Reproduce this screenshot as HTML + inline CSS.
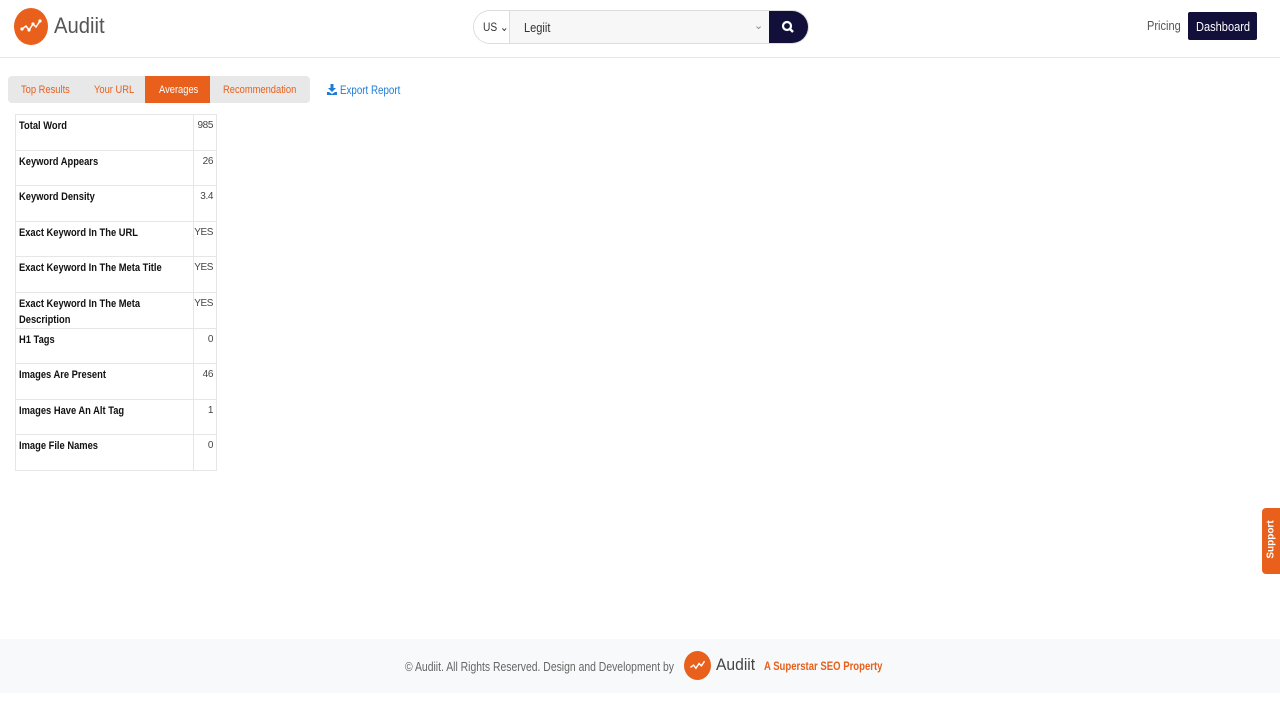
<!DOCTYPE html>
<html><head><meta charset="utf-8"><style>
*{box-sizing:border-box;margin:0;padding:0}
body{width:1280px;height:720px;position:relative;background:#fff;font-family:"Liberation Sans",sans-serif;overflow:hidden}
.sq{display:inline-block;transform:scaleX(.85);transform-origin:left center;white-space:nowrap}
.hdr{position:absolute;left:0;top:0;width:1280px;height:58px;border-bottom:1px solid #e6e6e6}
.logo{position:absolute;left:14px;top:8px;width:34px;height:37px;border-radius:50%;background:#e8601c}
.lt{position:absolute;left:54px;top:13px;font-size:22px;color:#555}
.srch{position:absolute;left:473px;top:10px;width:336px;height:34px;border:1px solid #ddd;border-radius:17px;overflow:hidden;background:#f7f7f7}
.us{position:absolute;left:0;top:0;width:36px;height:34px;background:#fff;border-right:1px solid #ddd;font-size:12px;color:#333;padding:9px 0 0 9px}
.inp{position:absolute;left:50px;top:9px;font-size:13px;color:#333}
.car{position:absolute;left:280px;top:8px;font-size:11px;color:#888}
.btn{position:absolute;right:0;top:0;width:39px;height:34px;background:#12103a}
.pr{position:absolute;left:1147px;top:18px;font-size:13px;color:#555}
.db{position:absolute;left:1188px;top:12px;width:69px;height:28px;background:#12103a;border-radius:2px;color:#fff;font-size:13px;padding:7px 0 0 8px}
.tabs{position:absolute;left:8px;top:76px;width:302px;height:27px;background:#e8e8e8;border-radius:4px}
.tab{position:absolute;top:0;height:27px;font-size:11px;color:#e8601c;padding-top:8px}
.act{background:#e8601c;color:#fff}
.exp{position:absolute;left:327px;top:84px;font-size:11.5px;color:#1e7bd8}
table{position:absolute;left:15px;top:114px;border-collapse:collapse;table-layout:fixed;width:201px}
td{border:1px solid #e6e6e6;height:35.5px;vertical-align:top;font-size:11px;padding:3px 3px 0;line-height:16px}
td:first-child{font-weight:bold;color:#111;overflow:hidden}
td:last-child{color:#444;text-align:right;font-size:10px;letter-spacing:-0.4px;padding:3px 3px 0 0}
.ft{position:absolute;left:0;top:639px;width:1280px;height:54px;background:#f8f9fa}
.ft .sq{transform:scaleX(.8)}
.sup{position:absolute;left:1262px;top:508px;width:18px;height:66px;background:#e8601c;border-radius:4px 0 0 4px}
.sup span{position:absolute;left:-14px;top:26px;transform:rotate(-90deg);color:#fff;font-size:10px;font-weight:bold;width:46px;text-align:center}
</style></head><body>
<div class="hdr">
<div class="logo"><svg width="34" height="37" viewBox="0 0 34 37"><polyline points="8,21 12,18 15,22 19,16 22,19 26,13" fill="none" stroke="#fff" stroke-width="1.5"/><circle cx="8" cy="21" r="1.6" fill="#fff"/><circle cx="15" cy="22" r="1.6" fill="#fff"/><circle cx="19" cy="16" r="1.6" fill="#fff"/><circle cx="26" cy="13" r="1.6" fill="#fff"/></svg></div>
<div class="lt"><span class="sq" style="transform:scaleX(.92)">Audiit</span></div>
<div class="srch"><div class="us"><span class="sq">US ⌄</span></div><div class="inp"><span class="sq">Legiit</span></div><div class="car">⌄</div><div class="btn"><svg width="39" height="34"><circle cx="18" cy="15" r="4" fill="none" stroke="#fff" stroke-width="2.2"/><line x1="21" y1="18" x2="24" y2="21" stroke="#fff" stroke-width="2.4"/></svg></div></div>
<div class="pr"><span class="sq">Pricing</span></div>
<div class="db"><span class="sq">Dashboard</span></div>
</div>
<div class="tabs">
<div class="tab" style="left:13px"><span class="sq">Top Results</span></div>
<div class="tab" style="left:86px"><span class="sq">Your URL</span></div>
<div class="tab act" style="left:137px;width:65px;padding-left:14px"><span class="sq">Averages</span></div>
<div class="tab" style="left:215px"><span class="sq">Recommendation</span></div>
</div>
<div class="exp"><svg width="10" height="11" style="vertical-align:-1px"><path d="M3.5 0h3v4h2.5L5 8 1 4h2.5z" fill="#1e7bd8"/><path d="M0 8h2l3 2 3-2h2v3H0z" fill="#1e7bd8"/></svg> <span class="sq">Export Report</span></div>
<table>
<colgroup><col style="width:178px"><col style="width:23px"></colgroup>
<tr><td><span class="sq">Total Word</span></td><td>985</td></tr>
<tr><td><span class="sq">Keyword Appears</span></td><td>26</td></tr>
<tr><td><span class="sq">Keyword Density</span></td><td>3.4</td></tr>
<tr><td><span class="sq">Exact Keyword In The URL</span></td><td>YES</td></tr>
<tr><td><span class="sq">Exact Keyword In The Meta Title</span></td><td>YES</td></tr>
<tr><td><span class="sq">Exact Keyword In The Meta</span><br><span class="sq">Description</span></td><td>YES</td></tr>
<tr><td><span class="sq">H1 Tags</span></td><td>0</td></tr>
<tr><td><span class="sq">Images Are Present</span></td><td>46</td></tr>
<tr><td><span class="sq">Images Have An Alt Tag</span></td><td>1</td></tr>
<tr><td><span class="sq">Image File Names</span></td><td>0</td></tr>
</table>
<div class="ft">
<div style="position:absolute;left:405px;top:20px;font-size:13px;color:#666"><span class="sq">© Audiit. All Rights Reserved. Design and Development by</span></div>
<div style="position:absolute;left:684px;top:12px;width:27px;height:29px;border-radius:50%;background:#e8601c"><svg width="27" height="29" viewBox="0 0 34 37"><polyline points="8,21 12,18 15,22 19,16 22,19 26,13" fill="none" stroke="#fff" stroke-width="1.8"/></svg></div>
<div style="position:absolute;left:716px;top:16px;font-size:17px;color:#444"><span class="sq" style="transform:scaleX(.92)">Audiit</span></div>
<div style="position:absolute;left:764px;top:22px;font-size:11.5px;color:#e8601c;font-weight:bold"><span class="sq" style="transform:scaleX(.83)">A Superstar SEO Property</span></div>
</div>
<div class="sup"><span>Support</span></div>
</body></html>
